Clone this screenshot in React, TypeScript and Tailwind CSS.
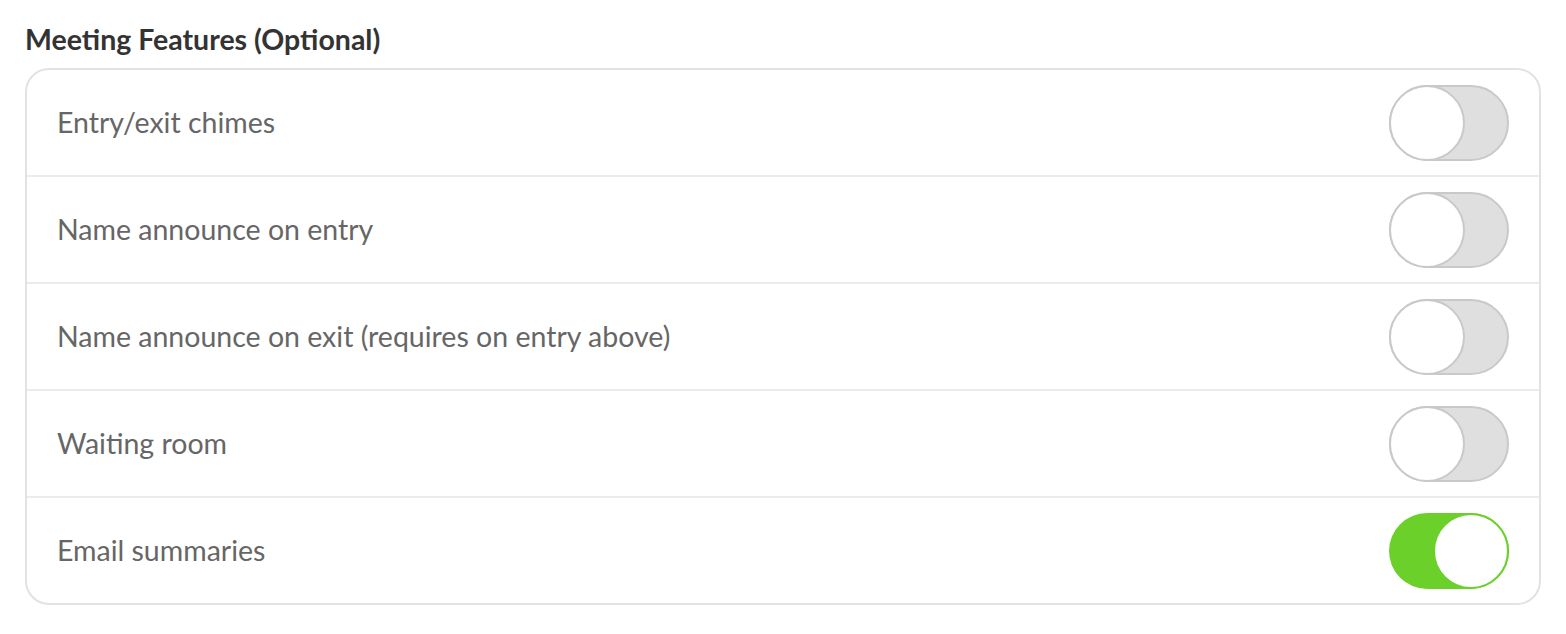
const features = [
  { label: "Entry/exit chimes", on: false },
  { label: "Name announce on entry", on: false },
  { label: "Name announce on exit (requires on entry above)", on: false },
  { label: "Waiting room", on: false },
  { label: "Email summaries", on: true },
];

function Toggle({ on }: { on: boolean }) {
  return (
    <div
      className={
        on
          ? "flex h-[76px] w-[120px] items-center justify-end rounded-full bg-[#6bd12a]"
          : "flex h-[76px] w-[120px] items-center justify-start rounded-full border-2 border-[#c9c9c9] bg-[#dfdfdf]"
      }
    >
      <div
        className={
          on
            ? "h-[76px] w-[76px] rounded-full border-2 border-[#6bd12a] bg-white"
            : "-ml-[2px] h-[76px] w-[76px] rounded-full border-2 border-[#c9c9c9] bg-white"
        }
      />
    </div>
  );
}

export default function App() {
  return (
    <div className="min-h-[634px] bg-white px-[25px] pt-[22px] font-['Source_Sans_Pro','Lato',sans-serif]">
      <h2 className="text-[28.5px] font-bold leading-[34px] text-[#333]">Meeting Features (Optional)</h2>
      <div className="mt-[12px] w-[1516px] overflow-hidden rounded-[24px] border-2 border-[#e2e2e2] bg-white">
        {features.map((f, i) => (
          <div
            key={f.label}
            className={
              "flex items-center justify-between pl-[30px] pr-[30px]" +
              (i > 0 ? " h-[107px] border-t-2 border-[#ebebeb]" : " h-[105px]")
            }
          >
            <span className="text-[28.5px] text-[#666]">{f.label}</span>
            <Toggle on={f.on} />
          </div>
        ))}
      </div>
    </div>
  );
}
